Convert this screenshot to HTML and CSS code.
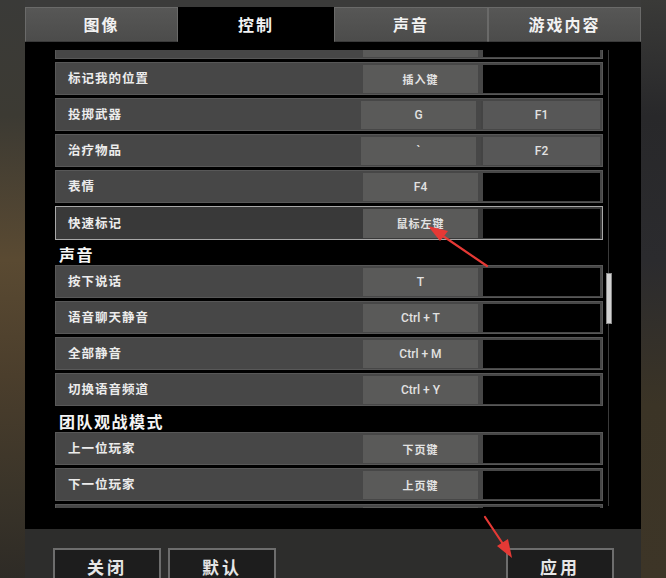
FILE: index.html
```html
<!DOCTYPE html>
<html lang="zh">
<head>
<meta charset="utf-8">
<link rel="stylesheet" href="styles.css">
</head>
<body>
<div class="screen">
  <div class="side side-left"></div>
  <div class="panel">
    <div class="tabs">
      <div class="tab">图像</div>
      <div class="tab active">控制</div>
      <div class="tab">声音</div>
      <div class="tab">游戏内容</div>
    </div>
    <div class="content">
      <div class="viewport">
        <div class="list">
          <div class="row"><div class="label"></div><div class="key k1"></div><div class="key k2 empty"></div></div>
          <div class="row"><div class="label">标记我的位置</div><div class="key k1">插入键</div><div class="key k2 empty"></div></div>
          <div class="row"><div class="label">投掷武器</div><div class="key k1 latin">G</div><div class="key k2 latin">F1</div></div>
          <div class="row"><div class="label">治疗物品</div><div class="key k1 latin">`</div><div class="key k2 latin">F2</div></div>
          <div class="row"><div class="label">表情</div><div class="key k1 latin">F4</div><div class="key k2 empty"></div></div>
          <div class="row selected"><div class="label">快速标记</div><div class="key k1">鼠标左键</div><div class="key k2 empty"></div></div>
          <div class="section">声音</div>
          <div class="row"><div class="label">按下说话</div><div class="key k1 latin">T</div><div class="key k2 empty"></div></div>
          <div class="row"><div class="label">语音聊天静音</div><div class="key k1 latin">Ctrl + T</div><div class="key k2 empty"></div></div>
          <div class="row"><div class="label">全部静音</div><div class="key k1 latin">Ctrl + M</div><div class="key k2 empty"></div></div>
          <div class="row"><div class="label">切换语音频道</div><div class="key k1 latin">Ctrl + Y</div><div class="key k2 empty"></div></div>
          <div class="section">团队观战模式</div>
          <div class="row"><div class="label">上一位玩家</div><div class="key k1">下页键</div><div class="key k2 empty"></div></div>
          <div class="row"><div class="label">下一位玩家</div><div class="key k1">上页键</div><div class="key k2 empty"></div></div>
          <div class="row"><div class="label"></div><div class="key k1"></div><div class="key k2 empty"></div></div>
        </div>
      </div>
      <div class="scrolltrack"><div class="thumb"></div></div>
    </div>
    <div class="footer">
      <div class="btn">关闭</div>
      <div class="btn">默认</div>
      <div class="spacer"></div>
      <div class="btn">应用</div>
    </div>
  </div>
  <div class="side side-right"></div>
</div>
<svg class="arrows" width="666" height="578" viewBox="0 0 666 578">
  <line x1="487" y1="266" x2="440" y2="234" stroke="#e53935" stroke-width="2.2" stroke-linecap="round"/>
  <polygon points="428,226 448,231 440,241" fill="#e53935"/>
  <line x1="485" y1="517" x2="503" y2="544" stroke="#e53935" stroke-width="2.2" stroke-linecap="round"/>
  <polygon points="512,558 497,546 508,539" fill="#e53935"/>
</svg>
</body>
</html>
```
FILE: styles.css
```css
html, body {
  margin: 0;
  padding: 0;
  width: 666px;
  height: 578px;
  overflow: hidden;
  background: #2a2925;
  font-family: "Noto Sans CJK SC", "Noto Sans", sans-serif;
}
.screen {
  display: flex;
  width: 666px;
  height: 578px;
  position: relative;
}
.side {
  width: 25px;
  flex: none;
}
.side-left {
  background: linear-gradient(180deg, #3a3a38 0%, #3c3a33 20%, #5a4a32 45%, #4b3e2c 65%, #3a3429 85%, #2e2b26 100%);
}
.side-right {
  width: 25px;
  background: linear-gradient(180deg, #3a3a38 0%, #28282a 20%, #2b2b2e 45%, #3b3426 70%, #3d3527 100%);
}
.panel {
  width: 616px;
  height: 578px;
  flex: none;
  display: flex;
  flex-direction: column;
  padding-top: 7px;
  box-sizing: border-box;
  background: linear-gradient(180deg, #3b3b3a 0px, #3b3b3a 7px, transparent 7px);
}
.tabs {
  display: grid;
  grid-template-columns: 153px 156px 154px 153px;
  height: 35px;
  flex: none;
}
.tab {
  display: flex;
  align-items: center;
  justify-content: center;
  background: linear-gradient(180deg, #575756 0%, #4c4c4b 100%);
  border: 1px solid #6a6a69;
  border-bottom-color: #3a3a3a;
  color: #f2f2f2;
  font-size: 16px;
  font-weight: 700;
  letter-spacing: 2px;
  padding-bottom: 2px;
}
.tab.active {
  background: #000;
  border-color: #000;
}
.content {
  background: #000;
  height: 487px;
  flex: none;
  display: flex;
  padding: 8px 0 0 30px;
  box-sizing: border-box;
  gap: 3px;
}
.viewport {
  width: 548px;
  height: 458px;
  overflow: hidden;
}
.list {
  margin-top: -24px;
  display: flex;
  flex-direction: column;
}
.row {
  height: 33px;
  margin-bottom: 3px;
  box-sizing: border-box;
  display: flex;
  align-items: stretch;
  background: #474747;
  border: 1px solid #585858;
  padding: 2px 2px 1px 0;
  gap: 5px;
}
.row.selected {
  background: #393939;
  border-color: #a8a8a8;
  height: 34px;
  margin-bottom: 2px;
}
.label {
  flex: 1;
  display: flex;
  align-items: center;
  padding-left: 12px;
  padding-bottom: 3px;
  color: #ececec;
  font-size: 12.5px;
  font-weight: 700;
  letter-spacing: 1px;
}
.key {
  display: flex;
  align-items: center;
  justify-content: center;
  padding-bottom: 1px;
  color: #e2e2e2;
  font-size: 11px;
  font-weight: 700;
  letter-spacing: 1px;
}
.k1 {
  width: 115px;
  background: #5a5a59;
}
.k2 {
  width: 117px;
  background: #575757;
  border-left: 2px solid #444;
}
.k2.empty {
  background: #000;
  border-left: none;
}
.key.latin {
  font-family: Roboto, "Noto Sans", sans-serif;
  font-weight: 500;
  font-size: 12px;
  letter-spacing: 0;
}
.section {
  height: 23px;
  display: flex;
  align-items: center;
  padding-left: 4px;
  color: #f4f4f4;
  font-size: 16px;
  font-weight: 700;
  letter-spacing: 1.5px;
}
.scrolltrack {
  width: 6px;
  height: 456px;
  display: flex;
  flex-direction: column;
  background: linear-gradient(90deg, transparent 2px, #3a3a3a 2px, #3a3a3a 3px, transparent 3px);
}
.thumb {
  margin-top: 223px;
  height: 51px;
  width: 6px;
  box-sizing: border-box;
  background: #d2d2d2;
  border: 1px solid #8a8a8a;
}
.footer {
  flex: 1;
  min-height: 0;
  overflow: hidden;
  background: #2d2d2c;
  display: flex;
  align-items: flex-start;
  padding: 19px 27px 0 28px;
  gap: 7px;
}
.btn {
  width: 108px;
  height: 34px;
  flex: none;
  box-sizing: border-box;
  background: #1d1d1d;
  border: 2px solid #6d6d6d;
  color: #e6e6e6;
  font-size: 17px;
  font-weight: 700;
  letter-spacing: 3px;
  display: flex;
  align-items: flex-start;
  justify-content: center;
  padding-top: 4px;
}
.spacer {
  flex: 1;
}
.arrows {
  position: absolute;
  left: 0;
  top: 0;
  pointer-events: none;
}
```
